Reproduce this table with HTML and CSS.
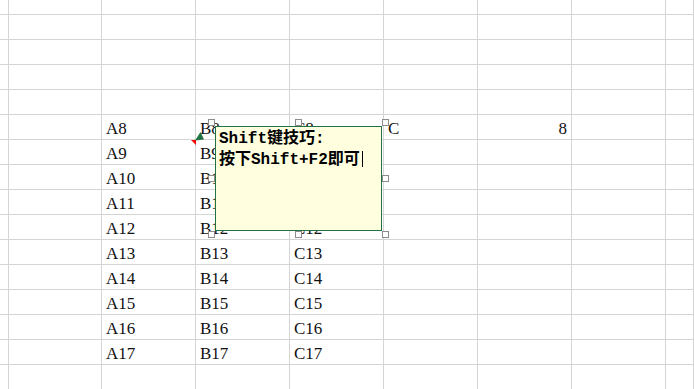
FILE: index.html
```html
<!DOCTYPE html>
<html lang="zh-CN">
<head>
<meta charset="utf-8">
<title>Sheet</title>
<link rel="stylesheet" href="styles.css">
</head>
<body>
<div class="sheet">
  <div class="grid">
    <div class="c"></div><div class="c"></div><div class="c"></div><div class="c"></div><div class="c"></div><div class="c"></div><div class="c"></div><div class="c"></div><div class="c"></div>
    <div class="c"></div><div class="c"></div><div class="c"></div><div class="c"></div><div class="c"></div><div class="c"></div><div class="c"></div><div class="c"></div><div class="c"></div>
    <div class="c"></div><div class="c"></div><div class="c"></div><div class="c"></div><div class="c"></div><div class="c"></div><div class="c"></div><div class="c"></div><div class="c"></div>
    <div class="c"></div><div class="c"></div><div class="c"></div><div class="c"></div><div class="c"></div><div class="c"></div><div class="c"></div><div class="c"></div><div class="c"></div>
    <div class="c"></div><div class="c"></div><div class="c"></div><div class="c"></div><div class="c"></div><div class="c"></div><div class="c"></div><div class="c"></div><div class="c"></div>

    <div class="c"></div><div class="c"></div><div class="c">A8</div><div class="c">B8</div><div class="c">C8</div><div class="c">C</div><div class="c num">8</div><div class="c"></div><div class="c"></div>
    <div class="c"></div><div class="c"></div><div class="c flag">A9</div><div class="c">B9</div><div class="c">C9</div><div class="c"></div><div class="c"></div><div class="c"></div><div class="c"></div>
    <div class="c"></div><div class="c"></div><div class="c">A10</div><div class="c">B10</div><div class="c">C10</div><div class="c"></div><div class="c"></div><div class="c"></div><div class="c"></div>
    <div class="c"></div><div class="c"></div><div class="c">A11</div><div class="c">B11</div><div class="c">C11</div><div class="c"></div><div class="c"></div><div class="c"></div><div class="c"></div>
    <div class="c"></div><div class="c"></div><div class="c">A12</div><div class="c">B12</div><div class="c">C12</div><div class="c"></div><div class="c"></div><div class="c"></div><div class="c"></div>
    <div class="c"></div><div class="c"></div><div class="c">A13</div><div class="c">B13</div><div class="c">C13</div><div class="c"></div><div class="c"></div><div class="c"></div><div class="c"></div>
    <div class="c"></div><div class="c"></div><div class="c">A14</div><div class="c">B14</div><div class="c">C14</div><div class="c"></div><div class="c"></div><div class="c"></div><div class="c"></div>
    <div class="c"></div><div class="c"></div><div class="c">A15</div><div class="c">B15</div><div class="c">C15</div><div class="c"></div><div class="c"></div><div class="c"></div><div class="c"></div>
    <div class="c"></div><div class="c"></div><div class="c">A16</div><div class="c">B16</div><div class="c">C16</div><div class="c"></div><div class="c"></div><div class="c"></div><div class="c"></div>
    <div class="c"></div><div class="c"></div><div class="c">A17</div><div class="c">B17</div><div class="c">C17</div><div class="c"></div><div class="c"></div><div class="c"></div><div class="c"></div>
    <div class="c"></div><div class="c"></div><div class="c"></div><div class="c"></div><div class="c"></div><div class="c"></div><div class="c"></div><div class="c"></div><div class="c"></div>
  </div>

  <svg class="arrow" width="14" height="12" viewBox="0 0 14 12">
    <polygon points="1,9.5 6.5,1 10,8.5" fill="#217346"/>
  </svg>

  <div class="note">
    <div class="note-text">Shift键技巧:<br>按下Shift+F2即可<span class="caret"></span></div>
  </div>
  <span class="h h-tl"></span><span class="h h-tm"></span><span class="h h-tr"></span>
  <span class="h h-ml"></span><span class="h h-mr"></span>
  <span class="h h-bl"></span><span class="h h-bm"></span><span class="h h-br"></span>
</div>
</body>
</html>
```

FILE: styles.css
```css
html, body {
  margin: 0;
  padding: 0;
  background: #ffffff;
}

.sheet {
  position: relative;
  width: 694px;
  height: 389px;
  overflow: hidden;
  background: #ffffff;
}

.grid {
  display: grid;
  grid-template-columns: 8px repeat(7, 94px) 1fr;
  grid-template-rows: 15px repeat(15, 25px);
}

.c {
  position: relative;
  box-sizing: border-box;
  border-right: 1px solid #d4d4d4;
  border-bottom: 1px solid #d4d4d4;
  padding: 3px 4px 0 4px;
  font-family: "Liberation Serif", "Times New Roman", serif;
  font-size: 17px;
  line-height: 21px;
  color: #111111;
  white-space: nowrap;
  overflow: visible;
}

.c.num {
  text-align: right;
}

.c.flag::after {
  content: "";
  position: absolute;
  top: 0;
  right: -1px;
  width: 0;
  height: 0;
  border-top: 5px solid #ff0000;
  border-left: 5px solid transparent;
}

.arrow {
  position: absolute;
  left: 194px;
  top: 131px;
}

.note {
  position: absolute;
  left: 215px;
  top: 126px;
  width: 167px;
  height: 105px;
  box-sizing: border-box;
  border: 1px solid #217346;
  background: #ffffe0;
}

.note-text {
  padding: 2px 0 0 3px;
  font-family: "Liberation Mono", "Noto Sans CJK SC", monospace;
  font-weight: bold;
  font-size: 16px;
  line-height: 21px;
  color: #000000;
  white-space: nowrap;
}

.caret {
  display: inline-block;
  width: 0;
  height: 16px;
  margin-left: 2px;
  border-left: 1px solid #000000;
  vertical-align: -3px;
}

.h {
  position: absolute;
  width: 7px;
  height: 7px;
  box-sizing: border-box;
  border: 1px solid #8c8c8c;
  background: #ffffff;
}

.h-tl { left: 208px; top: 119px; }
.h-tm { left: 295px; top: 119px; }
.h-tr { left: 382px; top: 119px; }
.h-ml { left: 208px; top: 175px; }
.h-mr { left: 382px; top: 175px; }
.h-bl { left: 208px; top: 231px; }
.h-bm { left: 295px; top: 231px; }
.h-br { left: 382px; top: 231px; }
```
